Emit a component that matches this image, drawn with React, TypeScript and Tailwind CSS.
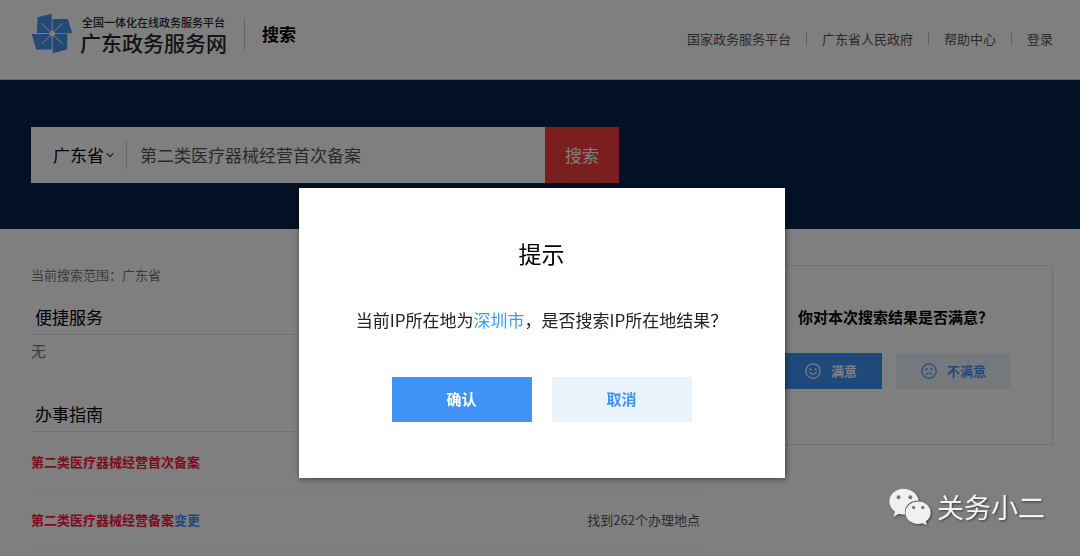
import { useState, type ReactNode } from "react";

const navLinks = ["国家政务服务平台", "广东省人民政府", "帮助中心", "登录"];

export default function App() {
  const [open, setOpen] = useState(true);

  return (
    <div className="relative min-h-screen bg-white font-['Noto_Sans_CJK_SC',sans-serif] text-black">
      <Header />
      <SearchBanner />
      <main className="flex items-start gap-[38px] pr-[27px] pl-[31px]">
        <Results />
        <Feedback />
      </main>
      {open ? <LocationDialog onClose={() => setOpen(false)} /> : null}
      <Watermark />
    </div>
  );
}

function Header() {
  return (
    <header className="flex h-20 items-start justify-between border-b border-[#d0d0d0] pr-[27px] pl-[31px]">
      <div className="flex items-center pt-[13px]">
        <Logo />
        <div className="ml-[7px] text-[#1c2a33]">
          <div className="pl-0.5 text-[11px] leading-4 font-medium">全国一体化在线政务服务平台</div>
          <div className="text-[21px] leading-6 font-medium">广东政务服务网</div>
        </div>
        <div className="ml-[17px] h-8 w-px bg-[#c8c8c8]" />
        <div className="ml-[17px] text-[17px] leading-6 font-bold">搜索</div>
      </div>
      <nav className="flex items-center pt-[29px] text-[13px] leading-5 text-[#555]">
        {navLinks.map((label) => (
          <a
            key={label}
            href="#"
            className="group flex items-center whitespace-nowrap"
          >
            <span className="mx-[15px] h-3 w-px bg-[#bbb] group-first:hidden" />
            {label}
          </a>
        ))}
      </nav>
    </header>
  );
}

function Logo() {
  return (
    <svg viewBox="30 39 128 125" className="h-[41px] w-[42px]" aria-hidden="true">
      <g fill="#4793f2">
        <path d="M50 52 93 41V93L86 100H48Z" />
        <path d="M96 57H142L156 101H104L96 93Z" />
        <path d="M104 103H141L140 150 96 162V111Z" />
        <path d="M32 103H86L93 111V150H46Z" />
      </g>
      <path
        d="M62 70 88 96M126 70 102 94M62 134 88 108M102 109 128 134"
        stroke="#fff"
        strokeWidth="3"
      />
      <circle cx="95" cy="102" r="8" fill="#fff" />
    </svg>
  );
}

function SearchBanner() {
  return (
    <section className="h-[149px] bg-[#06234c] pt-[47px] pr-[27px] pl-[31px]">
      <form
        className="flex h-14 max-w-[588px] bg-white text-[17px]"
        onSubmit={(event) => event.preventDefault()}
      >
        <div className="relative flex items-center">
          <select
            aria-label="地区"
            className="h-full w-[95px] appearance-none bg-transparent pl-[22px]"
            defaultValue="广东省"
          >
            <option>广东省</option>
          </select>
          <svg
            viewBox="0 0 10 6"
            className="pointer-events-none absolute right-3 h-1.5 w-2"
            fill="none"
            stroke="#333"
            strokeWidth="1.5"
            aria-hidden="true"
          >
            <path d="M1 1 5 5 9 1" />
          </svg>
        </div>
        <div className="h-7 w-px self-center bg-[#ccc]" />
        <input
          aria-label="搜索内容"
          className="min-w-0 flex-1 px-[13px] text-[#555] outline-none"
          defaultValue="第二类医疗器械经营首次备案"
        />
        <button type="submit" className="w-[74px] bg-[#f53d3d] text-white">
          搜索
        </button>
      </form>
    </section>
  );
}

function Results() {
  return (
    <div className="min-w-0 flex-1 pt-9">
      <p className="text-[13px] leading-5 text-[#777]">当前搜索范围：广东省</p>
      <SectionTitle>便捷服务</SectionTitle>
      <p className="pt-1 text-[15px] leading-6 text-[#777]">无</p>
      <div className="h-[19px]" />
      <SectionTitle>办事指南</SectionTitle>
      <ul className="text-[13px] leading-5">
        <ResultRow title="第二类医疗器械经营首次备案" />
        <ResultRow title="第二类医疗器械经营备案" suffix="变更" />
      </ul>
    </div>
  );
}

function ResultRow({ title, suffix }: { title: string; suffix?: string }) {
  return (
    <li className="flex h-14 items-center justify-between border-b border-dashed border-[#eee] first:h-[60px]">
      <a href="#" className="font-bold text-[#ff1540]">
        {title}
        {suffix ? <span className="text-[#4193f7]">{suffix}</span> : null}
      </a>
      <span className="text-[#555]">找到262个办理地点</span>
    </li>
  );
}

function SectionTitle({ children }: { children: ReactNode }) {
  return (
    <h2 className="mt-5 border-b border-[#e4e4e4] pb-[5px] pl-1 text-[17px] leading-6">
      {children}
    </h2>
  );
}

function Feedback() {
  return (
    <aside className="mt-9 h-[180px] w-[315px] border border-[#e0e0e0] pt-[39px] text-center">
      <h3 className="text-[15px] leading-6 font-bold">你对本次搜索结果是否满意？</h3>
      <div className="mt-6 flex justify-center gap-3.5 text-[13px] font-bold">
        <button
          type="button"
          className="flex h-9 items-center gap-2.5 bg-[#4193f7] px-[25px] text-white"
        >
          <Face mouth="M5.5 11Q10 17.5 14.5 11" />
          满意
        </button>
        <button
          type="button"
          className="flex h-9 items-center gap-2.5 bg-[#eaf3fc] px-[25px] text-[#4193f7]"
        >
          <Face mouth="M6 15Q10 10 14 15" />
          不满意
        </button>
      </div>
    </aside>
  );
}

function Face({ mouth }: { mouth: string }) {
  return (
    <svg
      viewBox="0 0 20 20"
      className="size-4"
      fill="none"
      stroke="currentColor"
      strokeWidth="1.5"
      aria-hidden="true"
    >
      <circle cx="10" cy="10" r="9" />
      <path d={mouth} />
      <circle cx="6.8" cy="8" r="1.3" fill="currentColor" stroke="none" />
      <circle cx="13.2" cy="8" r="1.3" fill="currentColor" stroke="none" />
    </svg>
  );
}

function LocationDialog({ onClose }: { onClose: () => void }) {
  return (
    <div className="fixed inset-0 flex items-start justify-center bg-black/50 pt-[188px] pl-[3px]">
      <div
        role="dialog"
        aria-modal="true"
        aria-labelledby="dialog-title"
        className="w-[486px] bg-white pt-[49px] pb-14 text-center shadow-[1px_1px_6px_rgba(0,0,0,0.5)]"
      >
        <h2 id="dialog-title" className="text-[23px] leading-8">
          提示
        </h2>
        <p className="mt-[39px] text-[17px] leading-6 whitespace-nowrap text-[#222]">
          当前IP所在地为<span className="text-[#3d9bee]">深圳市</span>，是否搜索IP所在地结果？
        </p>
        <div className="mt-[45px] flex justify-center gap-5 text-[15px] font-bold">
          <button type="button" onClick={onClose} className="h-[45px] w-[140px] bg-[#4193f7] text-white">
            确认
          </button>
          <button type="button" onClick={onClose} className="h-[45px] w-[140px] bg-[#eaf3fc] text-[#4193f7]">
            取消
          </button>
        </div>
      </div>
    </div>
  );
}

function Watermark() {
  return (
    <div className="pointer-events-none fixed right-[35px] bottom-[31px] flex items-center gap-1.5 text-[#f2f2f2] drop-shadow-[1px_1px_1px_rgba(0,0,0,0.5)]">
      <svg viewBox="0 0 128 112" className="h-[37px] w-[42px]" aria-hidden="true">
        <path
          fill="#f0f0f0"
          d="M45 2C20 2 1 19 1 41c0 13 7 24 17 31l-4 15 16-9c5 2 11 2 16 2h3C45 54 65 38 91 38 87 17 67 2 45 2Z"
        />
        <path
          fill="#f0f0f0"
          d="M89 41c-22 0-39 15-39 34s17 34 39 34c4 0 9-1 13-2l14 6-4-12c9-6 15-15 15-26 0-19-17-34-38-34Z"
        />
        <g fill="#777">
          <circle cx="29" cy="28" r="6" />
          <circle cx="65" cy="28" r="6" />
          <circle cx="75" cy="59" r="5" />
          <circle cx="103" cy="59" r="5" />
        </g>
      </svg>
      <span className="text-[27px] leading-8">关务小二</span>
    </div>
  );
}
